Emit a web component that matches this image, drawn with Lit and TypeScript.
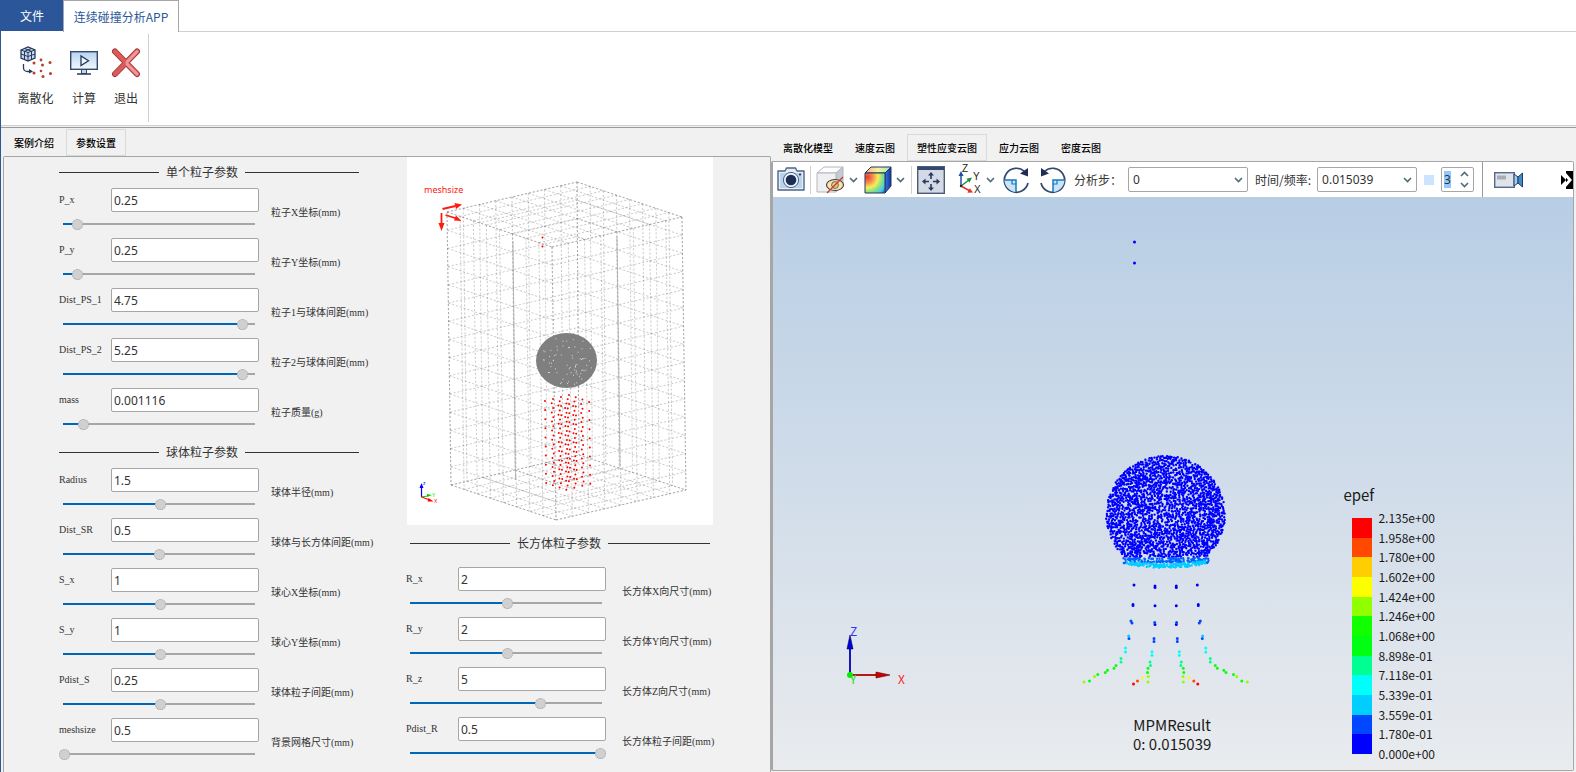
import { LitElement, html, svg, css } from "lit";
import { customElement, state } from "lit/decorators.js";

interface Param {
  name: string;
  value: string;
  pos: number;
  note: string;
}

const pointParams: Param[] = [
  { name: "P_x", value: "0.25", pos: 7, note: "粒子X坐标(mm)" },
  { name: "P_y", value: "0.25", pos: 7, note: "粒子Y坐标(mm)" },
  { name: "Dist_PS_1", value: "4.75", pos: 94, note: "粒子1与球体间距(mm)" },
  { name: "Dist_PS_2", value: "5.25", pos: 94, note: "粒子2与球体间距(mm)" },
  { name: "mass", value: "0.001116", pos: 10, note: "粒子质量(g)" },
];

const sphereParams: Param[] = [
  { name: "Radius", value: "1.5", pos: 51, note: "球体半径(mm)" },
  { name: "Dist_SR", value: "0.5", pos: 50, note: "球体与长方体间距(mm)" },
  { name: "S_x", value: "1", pos: 51, note: "球心X坐标(mm)" },
  { name: "S_y", value: "1", pos: 51, note: "球心Y坐标(mm)" },
  { name: "Pdist_S", value: "0.25", pos: 51, note: "球体粒子间距(mm)" },
  { name: "meshsize", value: "0.5", pos: 0, note: "背景网格尺寸(mm)" },
];

const boxParams: Param[] = [
  { name: "R_x", value: "2", pos: 51, note: "长方体X向尺寸(mm)" },
  { name: "R_y", value: "2", pos: 51, note: "长方体Y向尺寸(mm)" },
  { name: "R_z", value: "5", pos: 68, note: "长方体Z向尺寸(mm)" },
  { name: "Pdist_R", value: "0.5", pos: 100, note: "长方体粒子间距(mm)" },
];

const legendColors = [
  "#ff0000", "#ff4800", "#ffce00", "#fbff00", "#91ff00", "#12ff00",
  "#00ff12", "#00ff91", "#00fffb", "#00ceff", "#0048ff", "#0000ff",
];
const legendLabels = [
  "2.135e+00", "1.958e+00", "1.780e+00", "1.602e+00", "1.424e+00", "1.246e+00", "1.068e+00",
  "8.898e-01", "7.118e-01", "5.339e-01", "3.559e-01", "1.780e-01", "0.000e+00",
];

/* Small deterministic generator so that the particle clouds are stable. */
function random(seed: number): () => number {
  let s = seed;
  return () => {
    s = (s * 1664525 + 1013904223) % 4294967296;
    return s / 4294967296;
  };
}

function dot(x: number, y: number): string {
  return `M${x.toFixed(1)} ${y.toFixed(1)}h0`;
}

/* Deformed sphere: dark blue body with a lighter contact zone underneath. */
function sphereCloud() {
  const rnd = random(11);
  let body = "";
  let mid = "";
  let low = "";
  const placed: number[][] = [];
  for (let i = 0; i < 4300; i++) {
    const a = rnd() * Math.PI * 2;
    const r = Math.pow(rnd(), 0.47);
    const x = 392.5 + Math.cos(a) * r * 59.5;
    const y = 317.5 + Math.sin(a) * r * 58.5;
    if (y > 360) continue;
    if (placed.some((p) => Math.abs(p[0] - x) < 1.2 && Math.abs(p[1] - y) < 1.2)) continue;
    placed.push([x, y]);
    body += dot(x, y);
  }
  for (let i = 0; i < 150; i++) {
    const t = rnd() * 2 - 1;
    mid += dot(392.5 + t * 43, 361 + rnd() * 5);
  }
  for (let i = 0; i < 150; i++) {
    const t = rnd() * 2 - 1;
    low += dot(392.5 + t * 40, 364 + (1 - t * t) * 4 + rnd() * 4 - 1);
  }
  return { body, mid, low };
}

/* Left half of the particle streams; the right half mirrors it. */
const streams: [string, number[][]][] = [
  ["#0000f5", [[361, 388], [360, 407.5], [360, 408.5], [382, 389], [382, 390.5], [382, 408.8], [382, 427.5]]],
  ["#0048ff", [[358, 424], [359, 426], [356, 441.5], [381.7, 425.5], [381, 441.5], [381, 444.5]]],
  ["#00ceff", [[355.7, 439]]],
  ["#00fffb", [[352.5, 451], [352.5, 455], [379, 454.8], [379, 458.2]]],
  ["#00ff91", [[348, 461.5], [348, 465], [377, 465], [377.5, 468.5]]],
  ["#09ff09", [[343, 468.5], [341, 471.3], [334.5, 473.3], [332.3, 475.4], [324.8, 477.6], [316.5, 484], [375, 471.3], [374.5, 475.6]]],
  ["#91ff00", [[321.5, 479.6], [311, 485], [375.3, 479.6], [375, 485]]],
  ["#fbff00", [[369.5, 480.8]]],
  ["#ff4800", [[364.5, 484]]],
  ["#ff0000", [[360.5, 487]]],
];

function streamPath(points: number[][]): string {
  return points.map(([x, y]) => dot(x, y) + dot(785.3 - x, y)).join("");
}

/* Background mesh of the model: six faces of a skewed box. */
function meshPath(): string {
  const back = [170, 25];
  const right = [275, 60];
  const left = [40, 55];
  const front = [145, 90];
  const drop = (p: number[], dx: number) => [p[0] + dx, p[1] + 273];
  const backB = drop(back, 2);
  const rightB = drop(right, 4);
  const leftB = drop(left, 4);
  const frontB = drop(front, 4);
  const mix = (a: number[], b: number[], t: number) => [a[0] + (b[0] - a[0]) * t, a[1] + (b[1] - a[1]) * t];
  let d = "";
  const line = (a: number[], b: number[]) => {
    d += `M${a[0].toFixed(1)} ${a[1].toFixed(1)}L${b[0].toFixed(1)} ${b[1].toFixed(1)}`;
  };
  const face = (a: number[], b: number[], c: number[], e: number[], n: number, m: number) => {
    for (let i = 0; i <= n; i++) line(mix(a, b, i / n), mix(e, c, i / n));
    for (let j = 0; j <= m; j++) line(mix(a, e, j / m), mix(b, c, j / m));
  };
  face(left, back, backB, leftB, 8, 15);
  face(back, right, rightB, backB, 8, 15);
  face(left, front, frontB, leftB, 8, 15);
  face(front, right, rightB, frontB, 8, 15);
  face(left, back, right, front, 8, 8);
  face(leftB, backB, rightB, frontB, 8, 8);
  return d;
}

function boxDots(): string {
  let d = "";
  for (let k = 0; k < 10; k++)
    for (let i = 0; i < 4; i++)
      for (let j = 0; j < 4; j++) d += dot(138 + i * 8 + j * 6.7 + k * 0.13, 244 - i * 2 + j * 2.3 + k * 9.1);
  return d;
}

function specks(): string {
  const rnd = random(5);
  let d = "";
  for (let i = 0; i < 70; i++) {
    const a = rnd() * Math.PI * 2;
    const r = Math.sqrt(rnd());
    d += dot(159.5 + Math.cos(a) * r * 28, 203.5 + Math.sin(a) * r * 25);
  }
  return d;
}

const cloud = sphereCloud();
const mesh = meshPath();
const redDots = boxDots();
const whiteSpecks = specks();

const chevron = html`<svg class="chevron" viewBox="0 0 9 6" aria-hidden="true"><path d="M1 1l3.5 3.5L8 1" fill="none" stroke="#4f6b75" stroke-width="1.6"/></svg>`;

const icons = {
  discretize: html`<svg width="34" height="34" viewBox="0 0 34 34" aria-hidden="true">
    <path d="M2 4l7-3 7 3v8l-7 3-7-3z" fill="#c9d8ea" stroke="#26395f" stroke-width="1.3"/>
    <path d="M2 4l7 2.500L16 4M9 6.500V15M5.500 5.200v8.300M12.500 5.200v8.300M2 8l7 2.500L16 8M5.500 2.500l7 2.800M12.500 2.500l-7 2.800" fill="none" stroke="#26395f" stroke-width="1"/>
    <path d="M4.500 18v4c0 2 2 3.500 4 3.500h3" fill="none" stroke="#26395f" stroke-width="1.3"/>
    <path d="M10 23l4 2.500-4 2z" fill="#26395f"/>
    <g fill="#b5402b"><circle cx="15" cy="17" r="1.500"/><circle cx="22" cy="14" r="1.400"/><circle cx="31" cy="16.500" r="1.500"/><circle cx="23.500" cy="19" r="1.500"/><circle cx="15" cy="27" r="1.500"/><circle cx="22" cy="25" r="1.300"/><circle cx="31.500" cy="27.500" r="1.500"/><circle cx="24" cy="30.500" r="1.500"/></g>
  </svg>`,
  compute: html`<svg width="30" height="34" viewBox="0 0 30 34" aria-hidden="true">
    <defs><linearGradient id="scr" x1="0" y1="0" x2="0" y2="1"><stop offset="0" stop-color="#b5d4ee"/><stop offset="1" stop-color="#f3f8fc"/></linearGradient></defs>
    <rect x="1.700" y="5.700" width="26.600" height="17.600" fill="url(#scr)" stroke="#33476f" stroke-width="1.400"/>
    <path d="M12 10v9.500l7.500-4.700z" fill="#eef6fc" stroke="#26395f" stroke-width="1.300"/>
    <path d="M12.500 24v3.500h5V24" fill="#ccd5e2" stroke="#33476f"/>
    <path d="M8 28h14" stroke="#26395f" stroke-width="1.500"/>
  </svg>`,
  exit: html`<svg width="30" height="34" viewBox="0 0 30 34" aria-hidden="true">
    <path d="M4 5.500L26 28M26 5.500L4 28" stroke="#9a3636" stroke-width="6" stroke-linecap="round"/>
    <path d="M4 5.500L26 28M26 5.500L4 28" stroke="#dd5a5a" stroke-width="4.400" stroke-linecap="round"/>
    <path d="M16 16L26 5.500M16 18l10 10" stroke="#ea9a98" stroke-width="3" stroke-linecap="round"/>
  </svg>`,
  camera: html`<svg width="28" height="28" viewBox="0 0 28 28" aria-hidden="true">
    <path d="M1 5h7l1.500-3h9L20 5h7v19H1z" fill="#e6ecf4" stroke="#4d6488" stroke-width="1.400" stroke-linejoin="round"/>
    <path d="M3 7h22v15H3z" fill="#b9d3ea"/>
    <circle cx="14" cy="14" r="7.600" fill="#eaf2fa" stroke="#4d6488"/>
    <circle cx="14" cy="14" r="5.300" fill="#1d2d54"/><circle cx="23" cy="8.500" r="1.100" fill="#1d2d54"/>
  </svg>`,
  hide: html`<svg width="29" height="28" viewBox="0 0 29 28" aria-hidden="true">
    <path d="M1 7l7-6h19L20 7z" fill="#fdfdfe" stroke="#b4b6ba"/><path d="M20 7l7-6v18L20 26z" fill="#c6cad2" stroke="#b4b6ba"/><path d="M1 7h19v19H1z" fill="#eef0f4" stroke="#b4b6ba"/>
    <ellipse cx="19" cy="19" rx="8.500" ry="5.500" fill="#fbe2a9" stroke="#3d3a3a" stroke-width="1.100"/><circle cx="19" cy="19" r="3.400" fill="#f0cb86" stroke="#666"/>
    <path d="M11 27L27 11" stroke="#c4402c" stroke-width="1.400"/>
  </svg>`,
  contour: html`<svg width="28" height="28" viewBox="0 0 28 28" aria-hidden="true">
    <defs><radialGradient id="rb" cx=".12" cy=".2" r="1.100"><stop offset="0" stop-color="#ee3b2a"/><stop offset=".25" stop-color="#f58a53"/><stop offset=".48" stop-color="#f6ee55"/><stop offset=".7" stop-color="#7fe08a"/><stop offset=".88" stop-color="#49c8ee"/><stop offset="1" stop-color="#2a7fd0"/></radialGradient>
    <linearGradient id="tp" x1="0" x2="1"><stop offset="0" stop-color="#f6b080"/><stop offset=".5" stop-color="#f6f2a0"/><stop offset="1" stop-color="#9be8c0"/></linearGradient>
    <linearGradient id="sd" x1="0" x2="1"><stop offset="0" stop-color="#2f7fdc"/><stop offset="1" stop-color="#14309c"/></linearGradient></defs>
    <path d="M1 7l6-6h20l-6 6z" fill="url(#tp)" stroke="#27345c"/><path d="M21 7l6-6v19l-6 7z" fill="url(#sd)" stroke="#27345c"/><path d="M1 7h20v20H1z" fill="url(#rb)" stroke="#27345c"/>
  </svg>`,
  fit: html`<svg width="28" height="28" viewBox="0 0 28 28" aria-hidden="true">
    <rect x=".700" y=".700" width="26.600" height="26.600" fill="#d3dae5" stroke="#4b5b78" stroke-width="1.400"/><path d="M1 2.500h26" stroke="#33476f" stroke-width="3"/>
    <path d="M14 13V9M14 18v4M12 15.500H8M16 15.500h4" stroke="#26395f" stroke-width="1.600"/>
    <path d="M14 6l3 3.500h-6zM14 25l3-3.500h-6zM5 15.500l3.500-3v6zM23 15.500l-3.500-3v6z" fill="#26395f"/>
  </svg>`,
  axes: html`<svg width="30" height="32" viewBox="0 0 30 32" aria-hidden="true">
    <path d="M9 22V9" stroke="#1f4fa8" stroke-width="1.500"/><path d="M9 7l2.500 5h-5z" fill="#1f4fa8"/>
    <path d="M9 22l8-6" stroke="#1f8a3c" stroke-width="1.500"/><path d="M20 13.500l-2.500 5-3-3.800z" fill="#1f8a3c"/>
    <path d="M9 22l9 5" stroke="#e2322c" stroke-width="1.500"/><path d="M21 28.500l-5.600.200 2.400-4.500z" fill="#e2322c"/><circle cx="9" cy="22" r="1.200" fill="#222"/>
    <g font-family="Liberation Sans, sans-serif" font-size="10" fill="#222"><text x="10" y="8">Z</text><text x="21" y="16">Y</text><text x="22" y="29">X</text></g>
  </svg>`,
  rotate: svg`<path d="M22.500 5.500A12 12 0 1 0 26 17" fill="none" stroke="#33476f" stroke-width="1.700"/>
    <path d="M26 2v8.500l-8-3z" fill="#1d2d54"/>
    <path d="M2.500 14H14v12C8 26 2.500 20 2.500 14z" fill="#c9e4f7"/><path d="M2.500 14H14v12" fill="none" stroke="#1479c4" stroke-width="1.500"/><path d="M10 14v4h4" fill="none" stroke="#1479c4" stroke-width="1.200"/>`,
  video: html`<svg width="30" height="18" viewBox="0 0 30 18" aria-hidden="true">
    <rect x=".700" y="1.700" width="19.600" height="14.600" fill="#dfe3ea" stroke="#56698c" stroke-width="1.400"/><rect x="3" y="4.500" width="9" height="4" fill="#a9adb3"/>
    <path d="M20 3l4 3v6l-4 3z" fill="#9fd0f0" stroke="#26395f"/><path d="M24 6l4.500-4v14L24 12z" fill="#3f8dc8" stroke="#26395f"/>
  </svg>`,
  more: html`<svg width="12" height="18" viewBox="0 0 12 18" aria-hidden="true"><path d="M5 0h7v18H5z" fill="#000"/><path d="M3 2l6 7-6 7" fill="none" stroke="#fff" stroke-width="3"/><path d="M0 4l5 5-5 5z" fill="#000"/></svg>`,
};

@customElement("param-row")
class ParamRow extends LitElement {
  static properties = { param: { attribute: false } };
  declare param: Param;

  static styles = css`
    :host { display: block; }
    .row {
      display: grid;
      grid-template-columns: 52px 148px minmax(0, 1fr);
      grid-template-rows: 24px 24px;
      align-items: center;
    }
    .name, .note {
      font: 10px/16px "Liberation Serif", "Noto Sans CJK SC", serif;
      color: #333;
      white-space: nowrap;
    }
    .note { grid-column: 3; grid-row: 1 / 3; padding: 2px 0 0 var(--note-gap, 12px); }
    .value {
      box-sizing: border-box;
      width: 100%;
      height: 24px;
      padding: 0 2px;
      border: 1px solid #a6a6a6;
      border-radius: 2px;
      background: #fff;
      color: #333;
      font: 12px "Noto Sans", sans-serif;
    }
    .slider {
      grid-column: 1 / 3;
      appearance: none;
      width: 200px;
      height: 12px;
      margin: 0;
      background: linear-gradient(to right, #0067b8 var(--pos), #a6a6a6 var(--pos)) 4px center / 192px 2px no-repeat;
    }
    .slider::-webkit-slider-thumb {
      appearance: none;
      box-sizing: border-box;
      width: 11px;
      height: 11px;
      border: 1px dotted #a0a0a0;
      border-radius: 50%;
      background: #d0d0d0;
    }
  `;

  render() {
    const p = this.param;
    return html`<div class="row">
      <label class="name" for="value">${p.name}</label>
      <input class="value" id="value" type="text" .value=${p.value} />
      <span class="note" id="note">${p.note}</span>
      <input class="slider" type="range" min="0" max="100" .value=${String(p.pos)} aria-labelledby="note" style="--pos:${p.pos}%" />
    </div>`;
  }
}

@customElement("param-group")
class ParamGroup extends LitElement {
  static properties = { heading: {}, params: { attribute: false } };
  declare heading: string;
  declare params: Param[];

  static styles = css`
    :host { display: block; }
    .heading {
      display: grid;
      grid-template-columns: 100px auto 1fr;
      align-items: center;
      gap: 7px;
      width: 300px;
      margin: 0 0 var(--head-gap, 8px) var(--head-inset, 0);
      font: 12px/16px "Noto Sans CJK SC", sans-serif;
      color: #333;
    }
    .heading::before, .heading::after { content: ""; height: 1px; background: #333; }
    .rows { display: grid; gap: 2px; }
  `;

  render() {
    return html`<h2 class="heading">${this.heading}</h2>
      <div class="rows">${this.params.map((p) => html`<param-row .param=${p}></param-row>`)}</div>`;
  }
}

@customElement("model-picture")
class ModelPicture extends LitElement {
  static styles = css`
    :host { display: block; background: #fff; }
    svg { display: block; width: 100%; }
  `;

  render() {
    return html`<svg viewBox="0 0 306 368" role="img" aria-label="meshsize">
      <path d=${mesh} fill="none" stroke="#555" stroke-opacity=".5" stroke-width=".6" stroke-dasharray="2.200 1.800" />
      <path d="M106 84L108.500 323M210 80L213 310" stroke="#aaa" stroke-width=".8" />
      <ellipse cx="159.500" cy="203.500" rx="30.500" ry="27.500" fill="#7f7f7f" />
      <path d=${whiteSpecks} stroke="#eee" stroke-width="1" stroke-linecap="round" />
      <path d=${redDots} stroke="#f00" stroke-width="2" stroke-linecap="round" />
      <path d="M135.500 80.500h0M135.500 89.500h0" stroke="#f00" stroke-width="2" stroke-linecap="round" />
      <text x="17" y="36" font-family="Noto Sans, sans-serif" font-size="9" fill="#ff1a10">meshsize</text>
      <path d="M35.500 52l13-3M38.500 58l11 3.500M34.500 56v12" stroke="#ff1a10" stroke-width="1.800" />
      <path d="M55 47.500l-7.500-1.500 1.500 6zM54.500 64l-7.500-.500 2-5zM34.500 74l-3-8h6z" fill="#ff1a10" />
      <path d="M14.500 340v-11" stroke="#00f" stroke-width="1.200" /><path d="M14.500 326l2 5h-4z" fill="#00f" />
      <path d="M14.500 340l6-1" stroke="#0c0" /><path d="M25 338l-5-1v3z" fill="#0c0" />
      <path d="M14.500 340l7 2.500" stroke="#f00" stroke-width="1.200" /><path d="M26.500 344.500l-6 0 1-3.500z" fill="#f00" />
      <g font-family="Liberation Sans, sans-serif" font-size="5"><text x="16" y="328" fill="#00f">z</text><text x="25" y="340" fill="#0c0">Y</text><text x="27" y="346" fill="#f00">X</text></g>
    </svg>`;
  }
}

@customElement("result-view")
class ResultView extends LitElement {
  static styles = css`
    :host {
      display: block;
      position: relative;
      flex: 1;
      overflow: hidden;
      background: linear-gradient(#b8cee5, #e9ebee);
      color: #1a1a1a;
      font-family: "Noto Sans CJK SC", sans-serif;
    }
    .scene { display: block; width: 100%; }
    .caption {
      position: absolute;
      left: 45%;
      bottom: 17px;
      margin: 0;
      font-size: 15px;
      line-height: 19px;
      text-align: center;
    }
    .legend { position: absolute; right: 138px; bottom: 8px; }
    .title { font-size: 15px; line-height: 20px; margin: 0 0 5px -9px; }
    .scale { display: flex; gap: 6px; }
    .bar { display: flex; flex-direction: column; width: 20px; height: 236px; margin: 8px 0; }
    .band { flex: 1; }
    .ticks { display: flex; flex-direction: column; justify-content: space-between; height: 252px; font-size: 12px; line-height: 16px; }
  `;

  render() {
    return html`
      <svg class="scene" viewBox="0 0 800 573" role="img" aria-label="epef">
        <path d="M361.500 45h0M361.500 66h0" stroke="#00f" stroke-width="3" stroke-linecap="round" />
        <g fill="none" stroke-width="2.400" stroke-linecap="round">
          <path d=${cloud.body} stroke="#0000ff" />
          <path d=${cloud.mid} stroke="#0060ff" />
          <path d=${cloud.low} stroke="#00ceff" />
        </g>
        <g fill="none" stroke-width="3" stroke-linecap="round">
          ${streams.map(([color, pts]) => svg`<path d=${streamPath(pts)} stroke=${color} />`)}
        </g>
        <path d="M77 478h28" stroke="#b00000" stroke-width="1.800" />
        <path d="M117 478l-14 3v-6z" fill="#d00000" stroke="#500" stroke-width=".6" />
        <path d="M77 476v-26" stroke="#0000b0" stroke-width="1.800" />
        <path d="M77 438l3 14h-6z" fill="#0000e0" stroke="#005" stroke-width=".6" />
        <circle cx="77" cy="478" r="3" fill="#0e0" />
        <g font-family="Noto Sans CJK SC, sans-serif" font-size="12"><text x="77" y="439" fill="#33f">Z</text><text x="77" y="487" fill="#2d2">Y</text><text x="125" y="487" fill="#f22">X</text></g>
      </svg>
      <p class="caption">MPMResult<br />0: 0.015039</p>
      <div class="legend">
        <div class="title">epef</div>
        <div class="scale">
          <div class="bar">${legendColors.map((c) => html`<div class="band" style="background:${c}"></div>`)}</div>
          <div class="ticks">${legendLabels.map((l) => html`<span>${l}</span>`)}</div>
        </div>
      </div>`;
  }
}

@customElement("app-root")
class AppRoot extends LitElement {
  @state() leftTab = 1;
  @state() rightTab = 2;

  static styles = css`
    :host {
      display: flex;
      flex-direction: column;
      box-sizing: border-box;
      min-height: 100vh;
      border-left: 1px solid #2b579a;
      background: #f1f1f1;
      color: #333;
      font: 12px/16px "Noto Sans CJK SC", sans-serif;
    }
    button { font: inherit; color: inherit; border: 0; background: none; padding: 0; margin: 0; }
    .menu { display: flex; height: 32px; box-sizing: border-box; background: #fff; }
    .file { width: 62px; height: 31px; background: #2b579a; color: #fff; }
    .page { box-sizing: border-box; width: 116px; border: 1px solid #a6a6a6; border-bottom: 0; color: #2b579a; white-space: nowrap; }
    .menu::after { content: ""; flex: 1; border-bottom: 1px solid #d0d0d0; }
    .ribbon { display: flex; height: 93px; background: #fff; border-bottom: 1px solid #d0d0d0; }
    .tools { display: flex; margin: 2px 0 3px; padding-right: 1px; border-right: 1px solid #d0d0d0; }
    .tool { display: flex; flex-direction: column; align-items: center; gap: 10px; width: 42px; padding-top: 12px; }
    .tool.wide { width: 62px; padding-left: 7px; }
    .body {
      flex: 1;
      display: grid;
      grid-template-columns: 44fr 46fr;
      margin-top: 1px;
      border-top: 1px solid #999;
    }
    .side { display: flex; flex-direction: column; min-width: 0; padding-left: 2px; }
    .main { display: flex; flex-direction: column; min-width: 0; padding: 0 2px 1px 0; }
    .tabs { display: flex; gap: 2px; padding: 1px 1px 0; }
    .main .tabs { padding: 6px 2px 0; }
    .tab { box-sizing: border-box; height: 27px; padding: 0 9px; border: 1px solid transparent; font-size: 10px; font-weight: 500; color: #000; white-space: nowrap; }
    .tab.on { border-color: #d9d9d9; }
    .pane { flex: 1; border: 1px solid #a6a6a6; border-bottom: 0; border-radius: 2px 2px 0 0; display: flex; justify-content: flex-start; gap: 35px; padding-left: 55px; }
    .col { display: grid; gap: 8px; align-content: start; width: 312px; padding: 7px 0 5px; }
    .col.second { display: block; padding: 0; --note-gap: 16px; --head-inset: 4px; --head-gap: 16px; }
    .picture { width: 306px; margin: 0 0 10px 1px; }
    .view { flex: 1; display: flex; flex-direction: column; border: 1px solid #a6a6a6; border-left-width: 2px; border-radius: 2px; }
    .toolbar { display: flex; align-items: center; gap: 5px; height: 35px; padding-left: 4px; background: #fff; overflow: hidden; }
    .toolbar > * { flex: none; }
    .icon { display: flex; align-items: center; justify-content: center; gap: 4px; }
    .icon.drop { padding-right: 1px; }
    .icon.axes { padding-left: 2px; }
    .icon.turn { width: 32px; }
    .chevron { width: 9px; height: 6px; }
    .rule { width: 1px; height: 28px; background: #d0d0d0; }
    .rule.full { height: 35px; background: #999; margin: 0 6px 0 3px; }
    .caption { margin-right: 1px; }
    .combo { display: grid; align-items: center; margin-right: 2px; }
    .combo > * { grid-area: 1 / 1; }
    .combo .chevron { justify-self: end; margin-right: 5px; pointer-events: none; }
    .select { appearance: none; box-sizing: border-box; height: 25px; padding: 0 4px; border: 1px solid #a6a6a6; border-radius: 2px; background: #fff; color: #333; font: 12px "Noto Sans", sans-serif; }
    .select.step { width: 120px; }
    .select.time { width: 100px; }
    .swatch { width: 10px; height: 10px; background: #cce4ff; margin: 0 2px 0 0; }
    .spin { display: flex; box-sizing: border-box; width: 33px; height: 25px; border: 1px solid #a6a6a6; border-radius: 2px; }
    .number { box-sizing: border-box; width: 18px; padding: 0 2px; border: 0; background: linear-gradient(#90c8ff, #90c8ff) 2px center / 7px 17px no-repeat; color: #333; font: 12px "Noto Sans", sans-serif; }
    .steps { display: flex; flex-direction: column; justify-content: space-around; }
    .steps button { display: flex; }
    .flip { transform: scaleY(-1); }
    .mirror { transform: scaleX(-1); }
    .end { margin-left: auto; display: flex; }
  `;

  renderTab(name: string, on: boolean, pick: () => void) {
    return html`<button class="tab ${on ? "on" : ""}" role="tab" aria-selected=${on} @click=${pick}>${name}</button>`;
  }

  render() {
    const left = ["案例介绍", "参数设置"];
    const right = ["离散化模型", "速度云图", "塑性应变云图", "应力云图", "密度云图"];
    return html`
      <nav class="menu"><button class="file">文件</button><button class="page">连续碰撞分析APP</button></nav>
      <div class="ribbon">
        <div class="tools">
          <button class="tool wide">${icons.discretize}<span>离散化</span></button>
          <button class="tool">${icons.compute}<span>计算</span></button>
          <button class="tool">${icons.exit}<span>退出</span></button>
        </div>
      </div>
      <div class="body">
        <section class="side">
          <div class="tabs" role="tablist">${left.map((t, i) => this.renderTab(t, i === this.leftTab, () => (this.leftTab = i)))}</div>
          <div class="pane">
            <div class="col">
              <param-group heading="单个粒子参数" .params=${pointParams}></param-group>
              <param-group heading="球体粒子参数" .params=${sphereParams}></param-group>
            </div>
            <div class="col second">
              <model-picture class="picture"></model-picture>
              <param-group heading="长方体粒子参数" .params=${boxParams}></param-group>
            </div>
          </div>
        </section>
        <section class="main">
          <div class="tabs" role="tablist">${right.map((t, i) => this.renderTab(t, i === this.rightTab, () => (this.rightTab = i)))}</div>
          <div class="view">
            <div class="toolbar">
              <button class="icon" aria-label="截图">${icons.camera}</button>
              <span class="rule"></span>
              <button class="icon drop" aria-label="隐藏">${icons.hide}${chevron}</button>
              <button class="icon drop" aria-label="云图">${icons.contour}${chevron}</button>
              <span class="rule"></span>
              <button class="icon" aria-label="适应窗口">${icons.fit}</button>
              <button class="icon axes" aria-label="视角">${icons.axes}${chevron}</button>
              <button class="icon turn" aria-label="顺时针旋转"><svg width="28" height="28" viewBox="0 0 28 28">${icons.rotate}</svg></button>
              <button class="icon turn" aria-label="逆时针旋转"><svg class="mirror" width="28" height="28" viewBox="0 0 28 28">${icons.rotate}</svg></button>
              <label class="caption" for="step">分析步：</label>
              <span class="combo"><select class="select step" id="step"><option>0</option></select>${chevron}</span>
              <label class="caption" for="time">时间/频率:</label>
              <span class="combo"><select class="select time" id="time"><option>0.015039</option></select>${chevron}</span>
              <span class="swatch"></span>
              <span class="spin">
                <input class="number" type="text" inputmode="numeric" aria-label="帧" value="3" />
                <span class="steps"><button class="flip" aria-label="增加">${chevron}</button><button aria-label="减少">${chevron}</button></span>
              </span>
              <span class="rule full"></span>
              <button class="icon" aria-label="录制">${icons.video}</button>
              <button class="end" aria-label="更多">${icons.more}</button>
            </div>
            <result-view></result-view>
          </div>
        </section>
      </div>`;
  }
}
